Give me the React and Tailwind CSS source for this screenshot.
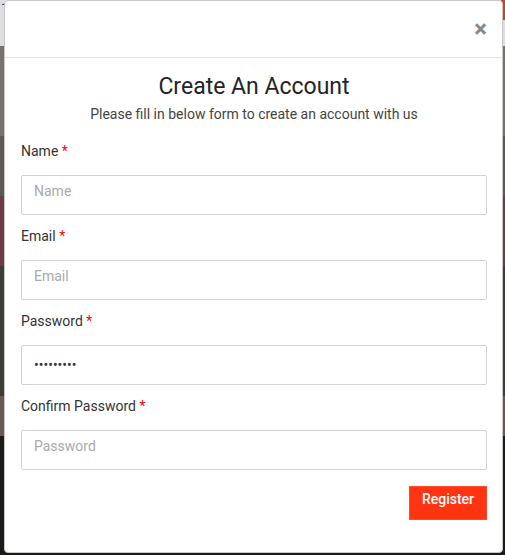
import React, { useState } from "react";

const font = { fontFamily: "Roboto, 'Noto Sans', sans-serif" };

const Field = ({ label, placeholder, type = "text", value, onChange }) => (
  <div className="flex flex-col">
    <label className="text-[14px] leading-[21px] text-[#333333]">
      {label} <span className="text-[#ff0000]">*</span>
    </label>
    <input
      type={type}
      value={value}
      onChange={onChange}
      placeholder={placeholder}
      className={`mt-[13px] mb-[11px] h-[40px] w-full rounded-[2px] border border-[#ced4da] px-[12px] text-[14px] text-[#333333] placeholder-[#aaaaaa] outline-none ${
        value ? "py-0" : "pt-0 pb-[9px]"
      }`}
    />
  </div>
);

const App = () => {
  const [form, setForm] = useState({
    name: "",
    email: "",
    password: "123456789",
    confirm: "",
  });

  const set = (key) => (e) => setForm({ ...form, [key]: e.target.value });

  return (
    <div
      className="relative h-[555px] w-[505px] overflow-hidden bg-[#3a3836]"
      style={font}
    >
      {/* dimmed page behind the modal */}
      <div className="flex h-full flex-col">
        <div className="flex h-[46px] items-start bg-[#dedede] pl-[1px] text-[13px] leading-[16px] text-[#1c1ca0]">
          1
        </div>
        <div className="h-[90px] bg-[#77726f]" />
        <div className="h-[60px] bg-[#5c5855]" />
        <div className="h-[70px] bg-[#6d3a45]" />
        <div className="h-[130px] bg-[#3f3d38]" />
        <div className="h-[40px] bg-[#6a5a55]" />
        <div className="flex-1 bg-[#1c1b1a]" />
      </div>
      <div className="absolute right-0 top-0 h-[20px] w-[4px] bg-[#e03a1a]" />

      {/* modal */}
      <div className="absolute left-[4px] top-0 flex h-[553px] w-[499px] flex-col rounded-[4px] border border-[#c8c8c8] bg-white">
        <div className="flex h-[57px] items-center justify-end border-b border-[#e5e5e5] pr-[15px]">
          <button className="text-[24px] font-bold leading-none text-[#888888]">
            ×
          </button>
        </div>

        <div className="flex flex-col pl-[16px] pr-[15px] pt-[15px]">
          <h2 className="text-center text-[23px] leading-[27px] text-[#212529]">
            Create An Account
          </h2>
          <p className="mt-[4px] text-center text-[14px] leading-[21px] text-[#444444]">
            Please fill in below form to create an account with us
          </p>

          <div className="mt-[16px] flex flex-col">
            <Field
              label="Name"
              placeholder="Name"
              value={form.name}
              onChange={set("name")}
            />
            <Field
              label="Email"
              placeholder="Email"
              type="email"
              value={form.email}
              onChange={set("email")}
            />
            <Field
              label="Password"
              placeholder="Password"
              type="password"
              value={form.password}
              onChange={set("password")}
            />
            <Field
              label="Confirm Password"
              placeholder="Password"
              type="password"
              value={form.confirm}
              onChange={set("confirm")}
            />
          </div>

          <div className="mt-[5px] flex justify-end">
            <button className="h-[34px] w-[78px] border border-[#ff4a2e] bg-[#ff3511] pb-[10px] pt-[2px] text-[14px] font-medium leading-[20px] text-white">
              Register
            </button>
          </div>
        </div>
      </div>
    </div>
  );
};

export default App;
